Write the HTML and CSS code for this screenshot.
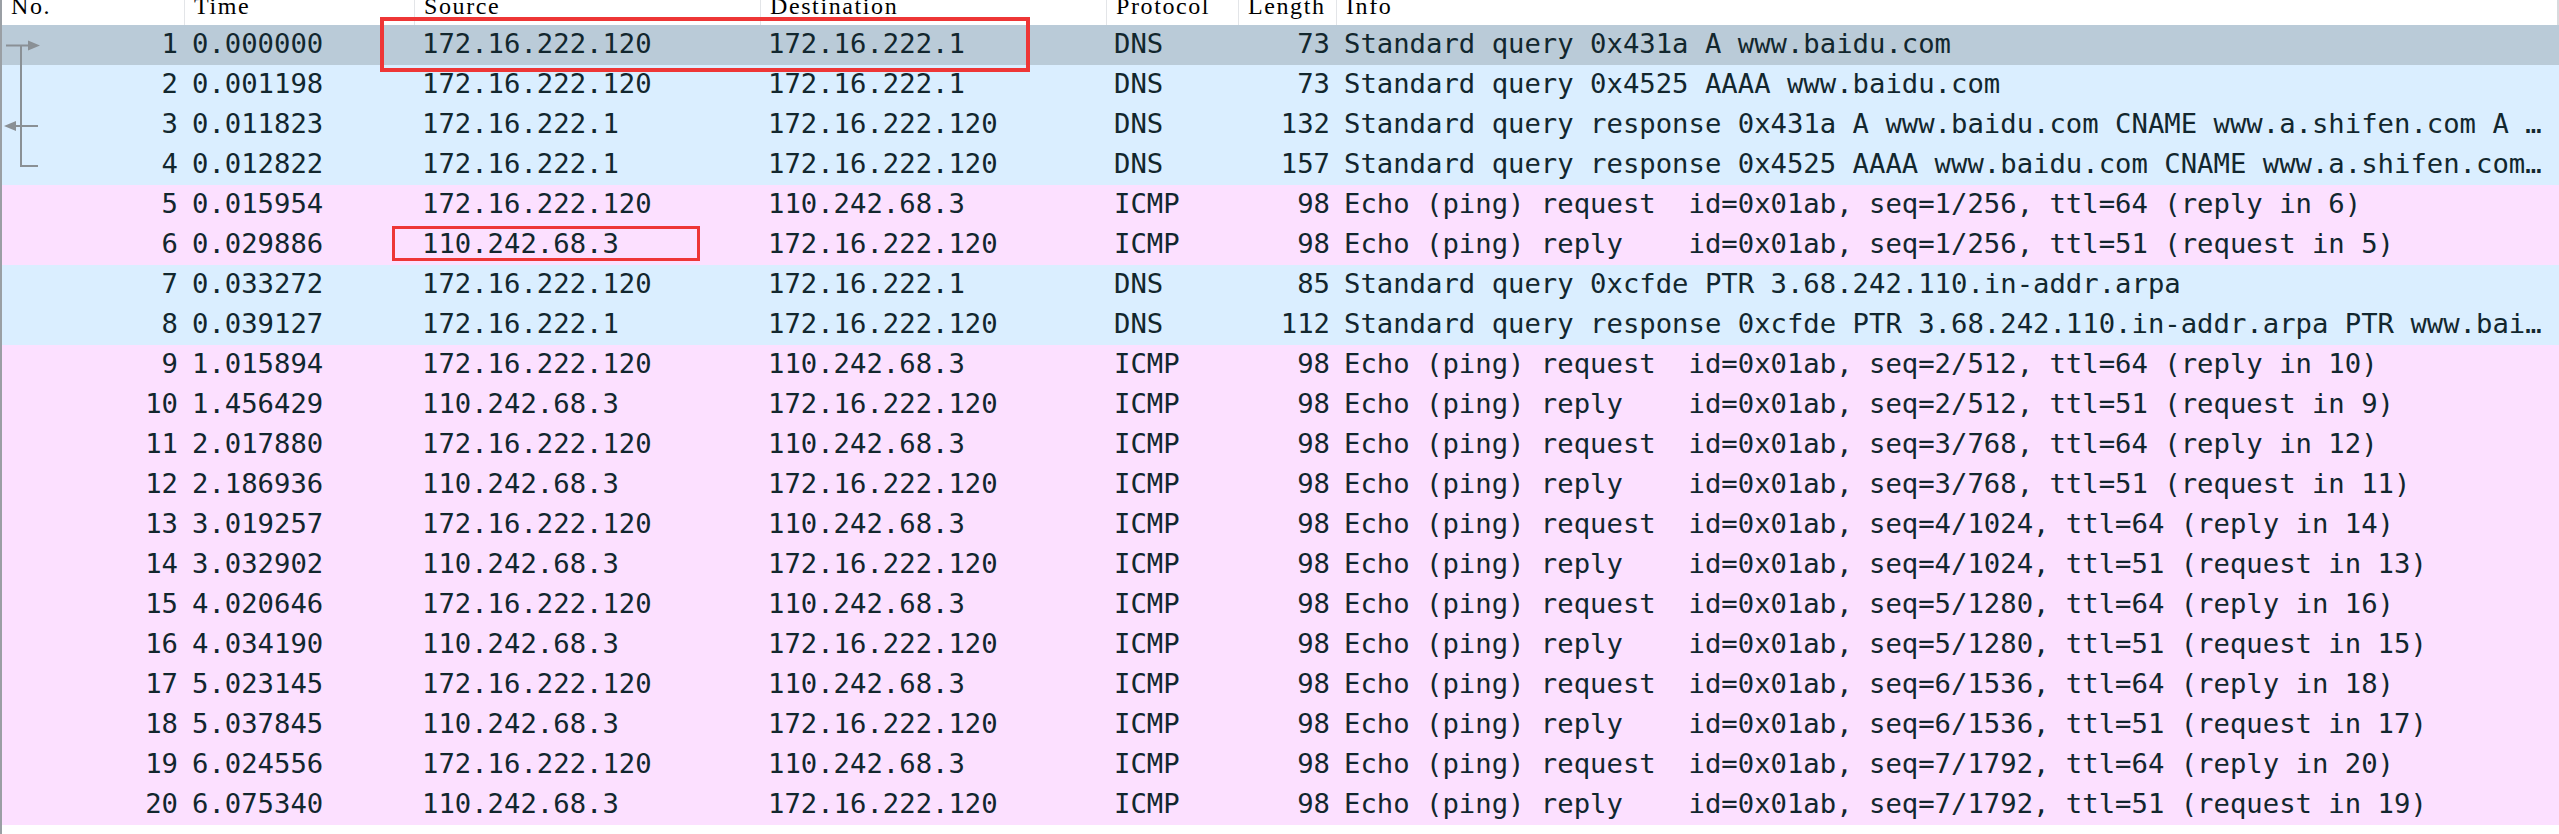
FILE: index.html
```html
<!DOCTYPE html>
<html>
<head>
<meta charset="utf-8">
<link rel="stylesheet" href="styles.css">
</head>
<body>
<div class="pane">
  <div class="list">
    <div class="row head">
      <div class="c c-no"><span class="h">No.</span></div>
      <div class="c"><span class="h">Time</span></div>
      <div class="c"><span class="h">Source</span></div>
      <div class="c"><span class="h">Destination</span></div>
      <div class="c"><span class="h">Protocol</span></div>
      <div class="c"><span class="h">Length</span></div>
      <div class="c c-last"><span class="h">Info</span></div>
    </div>

    <div class="row sel">
      <div class="c c-no"><svg class="rel" viewBox="0 0 44 40"><path d="M4 20.5H27M19 20.5V40"/><polygon points="26,15.5 38,20.5 26,25.5"/></svg><span>1</span></div>
      <div class="c">0.000000</div><div class="c">172.16.222.120</div><div class="c">172.16.222.1</div><div class="c">DNS</div><div class="c r">73</div><div class="c i">Standard query 0x431a A www.baidu.com</div>
    </div>
    <div class="row dns">
      <div class="c c-no"><svg class="rel" viewBox="0 0 44 40"><path d="M19 0V40"/></svg><span>2</span></div>
      <div class="c">0.001198</div><div class="c">172.16.222.120</div><div class="c">172.16.222.1</div><div class="c">DNS</div><div class="c r">73</div><div class="c i">Standard query 0x4525 AAAA www.baidu.com</div>
    </div>
    <div class="row dns">
      <div class="c c-no"><svg class="rel" viewBox="0 0 44 40"><path d="M19 0V40M13 21H36"/><polygon points="2,21 14,16 14,26"/></svg><span>3</span></div>
      <div class="c">0.011823</div><div class="c">172.16.222.1</div><div class="c">172.16.222.120</div><div class="c">DNS</div><div class="c r">132</div><div class="c i">Standard query response 0x431a A www.baidu.com CNAME www.a.shifen.com A …</div>
    </div>
    <div class="row dns">
      <div class="c c-no"><svg class="rel" viewBox="0 0 44 40"><path d="M19 0V21H36"/></svg><span>4</span></div>
      <div class="c">0.012822</div><div class="c">172.16.222.1</div><div class="c">172.16.222.120</div><div class="c">DNS</div><div class="c r">157</div><div class="c i">Standard query response 0x4525 AAAA www.baidu.com CNAME www.a.shifen.com…</div>
    </div>
    <div class="row icmp">
      <div class="c c-no"><span>5</span></div>
      <div class="c">0.015954</div><div class="c">172.16.222.120</div><div class="c">110.242.68.3</div><div class="c">ICMP</div><div class="c r">98</div><div class="c i">Echo (ping) request  id=0x01ab, seq=1/256, ttl=64 (reply in 6)</div>
    </div>
    <div class="row icmp">
      <div class="c c-no"><span>6</span></div>
      <div class="c">0.029886</div><div class="c">110.242.68.3</div><div class="c">172.16.222.120</div><div class="c">ICMP</div><div class="c r">98</div><div class="c i">Echo (ping) reply    id=0x01ab, seq=1/256, ttl=51 (request in 5)</div>
    </div>
    <div class="row dns">
      <div class="c c-no"><span>7</span></div>
      <div class="c">0.033272</div><div class="c">172.16.222.120</div><div class="c">172.16.222.1</div><div class="c">DNS</div><div class="c r">85</div><div class="c i">Standard query 0xcfde PTR 3.68.242.110.in-addr.arpa</div>
    </div>
    <div class="row dns">
      <div class="c c-no"><span>8</span></div>
      <div class="c">0.039127</div><div class="c">172.16.222.1</div><div class="c">172.16.222.120</div><div class="c">DNS</div><div class="c r">112</div><div class="c i">Standard query response 0xcfde PTR 3.68.242.110.in-addr.arpa PTR www.bai…</div>
    </div>
    <div class="row icmp">
      <div class="c c-no"><span>9</span></div>
      <div class="c">1.015894</div><div class="c">172.16.222.120</div><div class="c">110.242.68.3</div><div class="c">ICMP</div><div class="c r">98</div><div class="c i">Echo (ping) request  id=0x01ab, seq=2/512, ttl=64 (reply in 10)</div>
    </div>
    <div class="row icmp">
      <div class="c c-no"><span>10</span></div>
      <div class="c">1.456429</div><div class="c">110.242.68.3</div><div class="c">172.16.222.120</div><div class="c">ICMP</div><div class="c r">98</div><div class="c i">Echo (ping) reply    id=0x01ab, seq=2/512, ttl=51 (request in 9)</div>
    </div>
    <div class="row icmp">
      <div class="c c-no"><span>11</span></div>
      <div class="c">2.017880</div><div class="c">172.16.222.120</div><div class="c">110.242.68.3</div><div class="c">ICMP</div><div class="c r">98</div><div class="c i">Echo (ping) request  id=0x01ab, seq=3/768, ttl=64 (reply in 12)</div>
    </div>
    <div class="row icmp">
      <div class="c c-no"><span>12</span></div>
      <div class="c">2.186936</div><div class="c">110.242.68.3</div><div class="c">172.16.222.120</div><div class="c">ICMP</div><div class="c r">98</div><div class="c i">Echo (ping) reply    id=0x01ab, seq=3/768, ttl=51 (request in 11)</div>
    </div>
    <div class="row icmp">
      <div class="c c-no"><span>13</span></div>
      <div class="c">3.019257</div><div class="c">172.16.222.120</div><div class="c">110.242.68.3</div><div class="c">ICMP</div><div class="c r">98</div><div class="c i">Echo (ping) request  id=0x01ab, seq=4/1024, ttl=64 (reply in 14)</div>
    </div>
    <div class="row icmp">
      <div class="c c-no"><span>14</span></div>
      <div class="c">3.032902</div><div class="c">110.242.68.3</div><div class="c">172.16.222.120</div><div class="c">ICMP</div><div class="c r">98</div><div class="c i">Echo (ping) reply    id=0x01ab, seq=4/1024, ttl=51 (request in 13)</div>
    </div>
    <div class="row icmp">
      <div class="c c-no"><span>15</span></div>
      <div class="c">4.020646</div><div class="c">172.16.222.120</div><div class="c">110.242.68.3</div><div class="c">ICMP</div><div class="c r">98</div><div class="c i">Echo (ping) request  id=0x01ab, seq=5/1280, ttl=64 (reply in 16)</div>
    </div>
    <div class="row icmp">
      <div class="c c-no"><span>16</span></div>
      <div class="c">4.034190</div><div class="c">110.242.68.3</div><div class="c">172.16.222.120</div><div class="c">ICMP</div><div class="c r">98</div><div class="c i">Echo (ping) reply    id=0x01ab, seq=5/1280, ttl=51 (request in 15)</div>
    </div>
    <div class="row icmp">
      <div class="c c-no"><span>17</span></div>
      <div class="c">5.023145</div><div class="c">172.16.222.120</div><div class="c">110.242.68.3</div><div class="c">ICMP</div><div class="c r">98</div><div class="c i">Echo (ping) request  id=0x01ab, seq=6/1536, ttl=64 (reply in 18)</div>
    </div>
    <div class="row icmp">
      <div class="c c-no"><span>18</span></div>
      <div class="c">5.037845</div><div class="c">110.242.68.3</div><div class="c">172.16.222.120</div><div class="c">ICMP</div><div class="c r">98</div><div class="c i">Echo (ping) reply    id=0x01ab, seq=6/1536, ttl=51 (request in 17)</div>
    </div>
    <div class="row icmp">
      <div class="c c-no"><span>19</span></div>
      <div class="c">6.024556</div><div class="c">172.16.222.120</div><div class="c">110.242.68.3</div><div class="c">ICMP</div><div class="c r">98</div><div class="c i">Echo (ping) request  id=0x01ab, seq=7/1792, ttl=64 (reply in 20)</div>
    </div>
    <div class="row icmp">
      <div class="c c-no"><span>20</span></div>
      <div class="c">6.075340</div><div class="c">110.242.68.3</div><div class="c">172.16.222.120</div><div class="c">ICMP</div><div class="c r">98</div><div class="c i">Echo (ping) reply    id=0x01ab, seq=7/1792, ttl=51 (request in 19)</div>
    </div>
  </div>
  <div class="mark mark-1"></div>
  <div class="mark mark-2"></div>
</div>
</body>
</html>
```

FILE: styles.css
```css
html, body {
  margin: 0;
  padding: 0;
  background: #ffffff;
}

.pane {
  position: relative;
  width: 2559px;
  height: 834px;
  overflow: hidden;
  border-left: 2px solid #9a9fa4;
  box-sizing: border-box;
}

.list {
  display: flex;
  flex-direction: column;
}

.row {
  display: grid;
  grid-template-columns: 183px 230px 346px 346px 132px 98px 1fr;
  height: 40px;
  font-family: "DejaVu Sans Mono", monospace;
  font-size: 27.25px;
  line-height: 37px;
  color: #12272e;
}

.row .c {
  padding-left: 7px;
  white-space: pre;
  overflow: hidden;
}

.row .c-no {
  display: flex;
  padding-left: 0;
  padding-right: 7px;
}

.row .c-no span {
  margin-left: auto;
}

.row .r {
  text-align: right;
  padding-left: 0;
  padding-right: 7px;
}

.rel {
  width: 44px;
  height: 40px;
  flex: none;
}

.rel path {
  fill: none;
  stroke: #8a9095;
  stroke-width: 2;
}

.rel polygon {
  fill: #8a9095;
}

.head {
  height: 25px;
  background: #ffffff;
  font-family: "Liberation Serif", "DejaVu Serif", serif;
  font-size: 24px;
  letter-spacing: 1.6px;
  line-height: 13px;
  color: #000000;
}

.head .c {
  padding-left: 9px;
  border-right: 1px solid #e3e5e8;
  overflow: hidden;
}

.head .c-no {
  padding-left: 9px;
  padding-right: 0;
}

.head .c-no .h {
  margin-left: 0;
}

.head .c-last {
  border-right: 2px solid #d7dadd;
}

.sel {
  background: #bacbd8;
}

.dns {
  background: #daeeff;
}

.icmp {
  background: #fce0ff;
}

.mark {
  position: absolute;
  border: 4px solid #ee3636;
  box-sizing: border-box;
}

.mark-1 {
  left: 378px;
  top: 17px;
  width: 650px;
  height: 55px;
}

.mark-2 {
  left: 390px;
  top: 226px;
  width: 308px;
  height: 35px;
  border-width: 3px;
}
```
